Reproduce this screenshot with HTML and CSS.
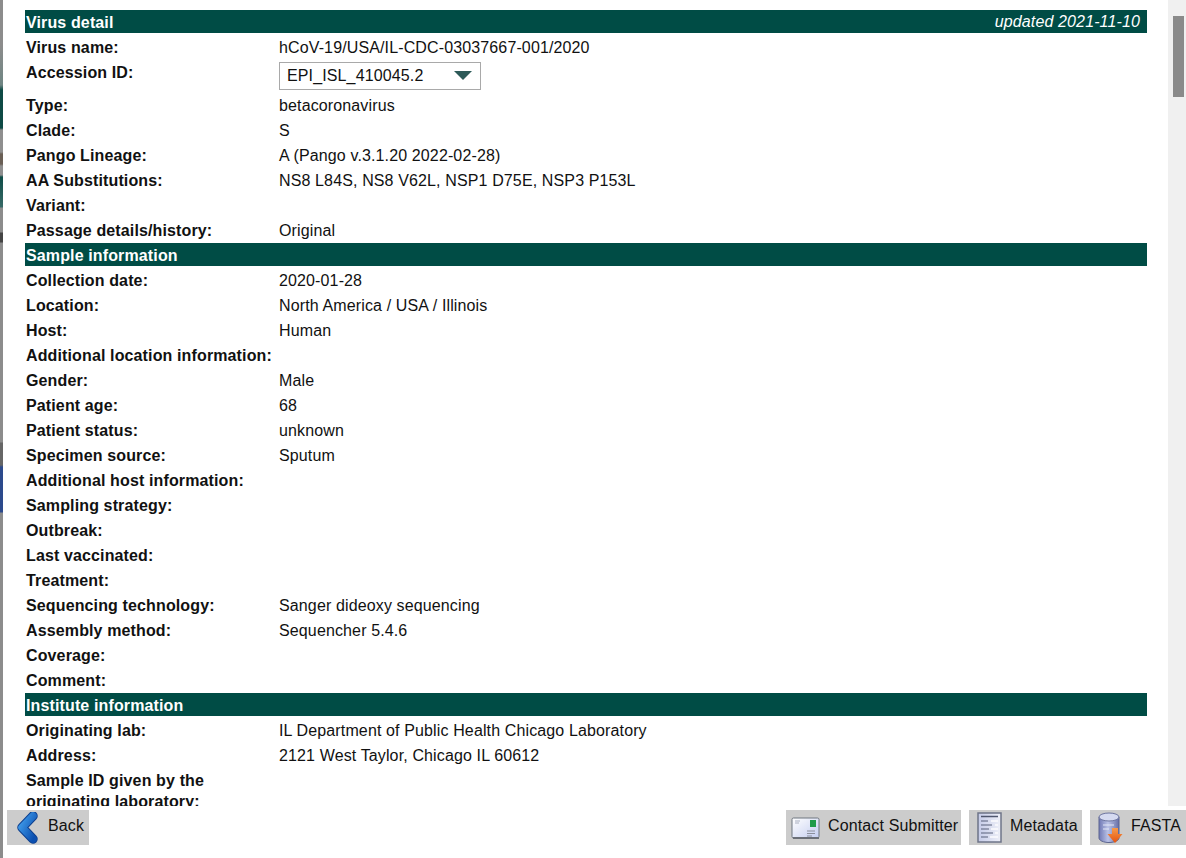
FILE: index.html
```html
<!DOCTYPE html>
<html lang="en">
<head>
<meta charset="utf-8">
<title>Virus detail</title>
<link rel="stylesheet" href="styles.css">
</head>
<body>
<div class="backdrop-edge"></div>
<div class="dialog">
  <div class="viewport">
    <main class="content">
      <section class="section">
        <h2 class="section-title"><span>Virus detail</span><em class="updated">updated 2021-11-10</em></h2>
        <div class="rows">
          <div class="row"><span class="label">Virus name:</span><span>hCoV-19/USA/IL-CDC-03037667-001/2020</span></div>
          <div class="row row-select"><span class="label">Accession ID:</span>
            <div class="select"><span>EPI_ISL_410045.2</span><i class="select-arrow"></i></div>
          </div>
          <div class="row"><span class="label">Type:</span><span>betacoronavirus</span></div>
          <div class="row"><span class="label">Clade:</span><span>S</span></div>
          <div class="row"><span class="label">Pango Lineage:</span><span>A (Pango v.3.1.20 2022-02-28)</span></div>
          <div class="row"><span class="label">AA Substitutions:</span><span>NS8 L84S, NS8 V62L, NSP1 D75E, NSP3 P153L</span></div>
          <div class="row"><span class="label">Variant:</span><span></span></div>
          <div class="row"><span class="label">Passage details/history:</span><span>Original</span></div>
        </div>
      </section>
      <section class="section">
        <h2 class="section-title"><span>Sample information</span></h2>
        <div class="rows">
          <div class="row"><span class="label">Collection date:</span><span>2020-01-28</span></div>
          <div class="row"><span class="label">Location:</span><span>North America / USA / Illinois</span></div>
          <div class="row"><span class="label">Host:</span><span>Human</span></div>
          <div class="row"><span class="label">Additional location information:</span><span></span></div>
          <div class="row"><span class="label">Gender:</span><span>Male</span></div>
          <div class="row"><span class="label">Patient age:</span><span>68</span></div>
          <div class="row"><span class="label">Patient status:</span><span>unknown</span></div>
          <div class="row"><span class="label">Specimen source:</span><span>Sputum</span></div>
          <div class="row"><span class="label">Additional host information:</span><span></span></div>
          <div class="row"><span class="label">Sampling strategy:</span><span></span></div>
          <div class="row"><span class="label">Outbreak:</span><span></span></div>
          <div class="row"><span class="label">Last vaccinated:</span><span></span></div>
          <div class="row"><span class="label">Treatment:</span><span></span></div>
          <div class="row"><span class="label">Sequencing technology:</span><span>Sanger dideoxy sequencing</span></div>
          <div class="row"><span class="label">Assembly method:</span><span>Sequencher 5.4.6</span></div>
          <div class="row"><span class="label">Coverage:</span><span></span></div>
          <div class="row"><span class="label">Comment:</span><span></span></div>
        </div>
      </section>
      <section class="section">
        <h2 class="section-title"><span>Institute information</span></h2>
        <div class="rows">
          <div class="row"><span class="label">Originating lab:</span><span>IL Department of Public Health Chicago Laboratory</span></div>
          <div class="row"><span class="label">Address:</span><span>2121 West Taylor, Chicago IL 60612</span></div>
          <div class="row row-wrap"><span class="label">Sample ID given by the originating laboratory:</span><span></span></div>
        </div>
      </section>
    </main>
    <div class="scrollbar"><div class="scrollbar-thumb"></div></div>
  </div>
  <footer class="footer">
    <button class="btn btn-back" type="button">
      <svg class="icon-back" width="23" height="32" viewBox="0 0 23 32">
        <defs><linearGradient id="backGrad" x1="0" y1="0" x2="1" y2="1"><stop offset="0" stop-color="#3f9bea"/><stop offset="1" stop-color="#0b4fb0"/></linearGradient></defs>
        <path d="M16 4 L5 15.500 L16 27" fill="none" stroke="#0d3f8f" stroke-width="9.500" stroke-linecap="round" stroke-linejoin="round"/>
        <path d="M16 4 L5 15.500 L16 27" fill="none" stroke="url(#backGrad)" stroke-width="7.500" stroke-linecap="round" stroke-linejoin="round"/>
      </svg>
      <span>Back</span>
    </button>
    <div class="actions">
      <button class="btn btn-contact" type="button">
        <svg width="29" height="24" viewBox="0 0 29 24">
          <defs><linearGradient id="mailGrad" x1="0" y1="0" x2="1" y2="1"><stop offset="0" stop-color="#ffffff"/><stop offset="1" stop-color="#c3cdf0"/></linearGradient></defs>
          <rect x="1" y="2" width="27" height="20" rx="1.5" fill="url(#mailGrad)" stroke="#6f7680" stroke-width="1"/>
          <rect x="2" y="21" width="26" height="2" fill="#6a6f78"/>
          <rect x="19" y="4" width="6" height="7" fill="#1f9b4a"/>
          <path d="M4 5h5M4 7h4" stroke="#a9afc0" stroke-width="1"/>
          <path d="M16 15h8M16 17.500h8M16 20h5" stroke="#8a8f9c" stroke-width="1"/>
        </svg>
        <span>Contact Submitter</span>
      </button>
      <button class="btn btn-meta" type="button">
        <svg width="25" height="31" viewBox="0 0 25 31">
          <defs><linearGradient id="docGrad" x1="0" y1="0" x2="1" y2="0"><stop offset="0" stop-color="#c5cbe8"/><stop offset="1" stop-color="#eef0f8"/></linearGradient></defs>
          <rect x="1" y="1" width="23" height="29" fill="url(#docGrad)" stroke="#6e7488" stroke-width="1.500"/>
          <path d="M4 4.500h17" stroke="#4f566e" stroke-width="1.500"/>
          <path d="M4 9h7M4 13h11M4 17h8M4 21h12M4 25h7" stroke="#59607a" stroke-width="1.200"/>
          <path d="M14 9h7M18 13h3M14 17h7M18 21h3M13 25h8" stroke="#fbfbfe" stroke-width="1.600"/>
        </svg>
        <span>Metadata</span>
      </button>
      <button class="btn btn-fasta" type="button">
        <svg width="26" height="32" viewBox="0 0 26 32">
          <defs>
            <linearGradient id="dbGrad" x1="0" y1="0" x2="1" y2="0"><stop offset="0" stop-color="#6f78b4"/><stop offset="0.45" stop-color="#bac2e6"/><stop offset="1" stop-color="#666ea6"/></linearGradient>
            <linearGradient id="arrowGrad" x1="0" y1="0" x2="0" y2="1"><stop offset="0" stop-color="#f79a4a"/><stop offset="1" stop-color="#e4520f"/></linearGradient>
          </defs>
          <path d="M1 5v21c0 2.500 4.500 4.500 10 4.500s10-2 10-4.500V5z" fill="url(#dbGrad)" stroke="#5d6590" stroke-width="1"/>
          <ellipse cx="11" cy="5" rx="10" ry="4" fill="#d5daf0" stroke="#6d75a0" stroke-width="1"/>
          <path d="M5 13h11M5 17h6" stroke="#e6e9f7" stroke-width="1.200"/>
          <path d="M14 16h6v6h4.500L17 31l-7.500-9H14z" fill="url(#arrowGrad)"/>
        </svg>
        <span>FASTA</span>
      </button>
    </div>
  </footer>
</div>
</body>
</html>
```

FILE: styles.css
```css
* {
  box-sizing: border-box;
}

html,
body {
  margin: 0;
  height: 100%;
}

body {
  display: flex;
  height: 858px;
  overflow: hidden;
  background: #fff;
  color: #111;
  font-family: "Liberation Sans", Arial, sans-serif;
  font-size: 16px;
  letter-spacing: 0.13px;
}

.backdrop-edge {
  flex: 0 0 3px;
  background: linear-gradient(
    to bottom,
    #8c8c8c 0,
    #8c8c8c 45px,
    #6f8583 85px,
    #0e4a45 90px,
    #0e4a45 128px,
    #8f8f8f 130px,
    #8f8f8f 152px,
    #6a5f55 154px,
    #6a5f55 164px,
    #8f8f8f 166px,
    #8f8f8f 175px,
    #0f4d48 177px,
    #386a67 207px,
    #8c8c8c 208px,
    #8c8c8c 232px,
    #444 233px,
    #444 242px,
    #8c8c8c 243px,
    #8c8c8c 442px,
    #666 443px,
    #666 465px,
    #2c4a8c 467px,
    #2c4a8c 512px,
    #8c8c8c 513px,
    #8c8c8c 100%
  );
}

.dialog {
  flex: 1;
  min-width: 0;
  display: flex;
  flex-direction: column;
}

.viewport {
  flex: 0 0 806px;
  display: flex;
  overflow: hidden;
}

.content {
  flex: 1;
  min-width: 0;
  padding: 10px 21px 0 22px;
  overflow: hidden;
}

.section-title {
  display: flex;
  justify-content: space-between;
  height: 23px;
  margin: 0;
  padding: 0 7px 0 1px;
  background: #004c45;
  color: #fff;
  font-size: 16px;
  font-weight: bold;
  line-height: 25px;
}

.updated {
  font-weight: normal;
  font-style: italic;
  line-height: 24px;
}

.rows {
  padding-top: 2px;
}

.row {
  display: grid;
  grid-template-columns: 254px 1fr;
  min-height: 25px;
  line-height: 25px;
}

.label {
  padding-left: 1px;
  font-weight: bold;
}

.row-select {
  height: 33px;
}

.row-wrap {
  padding-top: 2px;
  line-height: 21px;
}

.select {
  display: flex;
  align-items: center;
  justify-content: space-between;
  width: 202px;
  height: 28px;
  margin-top: 2px;
  padding: 0 8px 0 7px;
  border: 1px solid #a9a9a9;
  line-height: 26px;
}

.select-arrow {
  width: 0;
  height: 0;
  border-left: 9px solid transparent;
  border-right: 9px solid transparent;
  border-top: 9px solid #2d5a58;
  margin-top: -2px;
}

.scrollbar {
  flex: 0 0 18px;
  padding: 16px 2px 0 5px;
  background: #f0f0f0;
}

.scrollbar-thumb {
  height: 81px;
  background: #8a8a8a;
}

.footer {
  display: flex;
  justify-content: space-between;
  align-items: flex-start;
  padding: 4px 0 0 4px;
}

.actions {
  display: flex;
  gap: 8px;
}

.btn {
  display: flex;
  align-items: center;
  height: 35px;
  margin: 0;
  padding: 0;
  border: 0;
  background: #ccc;
  color: #111;
  font: inherit;
  letter-spacing: inherit;
  white-space: nowrap;
}

.btn svg {
  flex: none;
}

.btn span {
  margin-bottom: 4px;
}

.btn-back {
  width: 82px;
  padding-left: 10px;
}

.btn-back span {
  margin-left: 8px;
}

.btn-contact {
  width: 175px;
  padding-left: 5px;
}

.btn-contact span {
  margin-left: 8px;
}

.btn-meta {
  width: 113px;
  padding-left: 8px;
}

.btn-meta span {
  margin-left: 8px;
}

.btn-fasta {
  width: 96px;
  padding-left: 8px;
}

.btn-fasta span {
  margin-left: 7px;
}
```
